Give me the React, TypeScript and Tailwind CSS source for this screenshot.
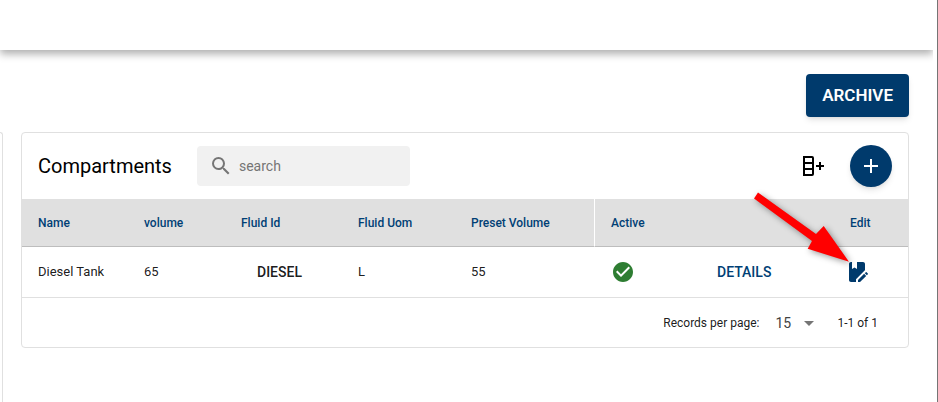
import { useState } from 'react'

interface Compartment {
  name: string
  volume: number
  fluidId: string
  fluidUom: string
  presetVolume: number
}

const compartments: Compartment[] = [
  { name: 'Diesel Tank', volume: 65, fluidId: 'DIESEL', fluidUom: 'L', presetVolume: 55 },
]

const columns = [
  { label: 'Name', width: 'w-[106px]' },
  { label: 'volume', width: 'w-[97px]' },
  { label: 'Fluid Id', width: 'w-[117px]' },
  { label: 'Fluid Uom', width: 'w-[113px]' },
  { label: 'Preset Volume', width: 'w-[139px]' },
  { label: 'Active', width: 'w-[107px] border-l border-l-white' },
  { label: '', width: 'w-[133px]' },
  { label: 'Edit', width: 'w-[74px]' },
]

const icons = {
  search:
    'M15.5 14h-.79l-.28-.27A6.471 6.471 0 0 0 16 9.5 6.5 6.5 0 1 0 9.5 16c1.61 0 3.09-.59 4.23-1.57l.27.28v.79l5 4.99L20.49 19l-4.99-5zm-6 0C7.01 14 5 11.99 5 9.5S7.01 5 9.5 5 14 7.01 14 9.5 11.99 14 9.5 14z',
  addColumn:
    'M11,2A2,2 0 0,1 13,4V20A2,2 0 0,1 11,22H2V2H11M4,10V14H11V10H4M4,16V20H11V16H4M4,4V8H11V4H4M15,11H18V8H20V11H23V13H20V16H18V13H15V11Z',
  add: 'M19 13h-6v6h-2v-6H5v-2h6V5h2v6h6v2z',
  check:
    'M12 2C6.48 2 2 6.48 2 12s4.48 10 10 10 10-4.48 10-10S17.52 2 12 2zm-2 15l-5-5 1.41-1.41L10 14.17l7.59-7.59L19 8l-9 9z',
  bookEdit:
    'M19.39 10.74L11 19.13V22H6C4.89 22 4 21.11 4 20V4C4 2.9 4.89 2 6 2H7V9L9.5 7.5L12 9V2H18C19.1 2 20 2.89 20 4V10.3C19.78 10.42 19.57 10.56 19.39 10.74M13 19.96V22H15.04L21.17 15.88L19.13 13.83L13 19.96M22.85 13.47L21.53 12.15C21.33 11.95 21 11.95 20.81 12.15L19.83 13.13L21.87 15.17L22.85 14.19C23.05 14 23.05 13.66 22.85 13.47Z',
  caret: 'M7 10l5 5 5-5z',
}

function Icon({ path, className }: { path: string; className?: string }) {
  return (
    <svg viewBox="0 0 24 24" fill="currentColor" className={className} aria-hidden="true">
      <path d={path} />
    </svg>
  )
}

function Toolbar() {
  const [search, setSearch] = useState('')

  return (
    <div className="flex h-[66px] items-center px-4">
      <h2 className="text-xl text-black">Compartments</h2>
      <label className="ml-[25px] flex h-10 w-[213px] items-center gap-1.5 rounded bg-[#f1f1f1] px-3">
        <Icon path={icons.search} className="size-6 shrink-0 text-[#757575]" />
        <input
          type="text"
          aria-label="Search compartments"
          placeholder="search"
          value={search}
          onChange={e => setSearch(e.target.value)}
          className="w-full min-w-0 bg-transparent text-sm outline-none placeholder:text-[#757575]"
        />
      </label>
      <div className="ml-auto flex items-center gap-[25px]">
        <button aria-label="Add column" className="text-black">
          <Icon path={icons.addColumn} className="size-6" />
        </button>
        <button
          aria-label="Add compartment"
          className="flex size-[42px] items-center justify-center rounded-full bg-[#003a6c] text-white shadow-md"
        >
          <Icon path={icons.add} className="size-6" />
        </button>
      </div>
    </div>
  )
}

function CompartmentTable() {
  return (
    <table className="w-full table-fixed border-separate border-spacing-0 text-left text-[13px]">
      <thead>
        <tr className="h-12 bg-[#e0e0e0] text-xs text-[#003f75]">
          {columns.map((col, index) => (
            <th key={index} className={`border-b border-b-[#bdbdbd] px-4 font-medium ${col.width}`}>
              {col.label}
            </th>
          ))}
        </tr>
      </thead>
      <tbody>
        {compartments.map(row => (
          <tr key={row.name} className="h-[50px]">
            <td className="px-4 whitespace-nowrap">{row.name}</td>
            <td className="px-4">{row.volume}</td>
            <td className="px-4">
              <button className="px-4 text-sm font-medium">{row.fluidId}</button>
            </td>
            <td className="px-4">{row.fluidUom}</td>
            <td className="px-4">{row.presetVolume}</td>
            <td className="border-l border-l-transparent px-4">
              <Icon path={icons.check} className="size-6 text-[#2e7d32]" />
            </td>
            <td className="px-4">
              <button className="text-sm font-medium text-[#003f75]">DETAILS</button>
            </td>
            <td className="px-[11px]">
              <button aria-label="Edit compartment" className="flex text-[#003a6c]">
                <Icon path={icons.bookEdit} className="size-6" />
              </button>
            </td>
          </tr>
        ))}
      </tbody>
    </table>
  )
}

function Pagination() {
  return (
    <div className="flex h-[50px] items-center justify-end border-t border-[#e0e0e0] px-[30px] text-xs">
      <label htmlFor="rows">Records per page:</label>
      <div className="relative ml-4 flex items-center">
        <select
          id="rows"
          defaultValue="15"
          className="w-[46px] appearance-none bg-transparent text-sm text-[#424242] outline-none"
        >
          <option>15</option>
          <option>25</option>
          <option>50</option>
        </select>
        <Icon path={icons.caret} className="pointer-events-none absolute right-0 size-6 text-[#757575]" />
      </div>
      <span className="ml-4">1-1 of 1</span>
    </div>
  )
}

// Red pointer towards the edit button
function Arrow() {
  return (
    <svg
      viewBox="0 0 110 84"
      className="pointer-events-none absolute top-[56px] right-12 h-[84px] w-[110px] drop-shadow-[2px_2px_3px_rgba(0,0,0,0.4)]"
      aria-hidden="true"
    >
      <path d="M8 3.5 L66 45 L73.7 37 L99 72.7 L57.7 59.7 L62 52 L4 9.5 Z" fill="#ff0000" />
    </svg>
  )
}

export default function App() {
  return (
    <div className="flex min-h-screen flex-col border-r border-[#757575] bg-white font-[Roboto,sans-serif] text-black/90">
      <header className="mr-1 h-[50px] bg-white shadow-[0_4px_8px_rgba(0,0,0,0.32)] [clip-path:inset(0_0_-16px_0)]" />
      <main className="flex grow flex-col gap-[15px] pt-6">
        <div className="flex justify-end pr-7">
          <button className="h-[43px] rounded bg-[#003a6c] px-4 text-[17px] font-semibold text-white shadow-md">
            ARCHIVE
          </button>
        </div>
        <div className="flex grow gap-[18px] pr-7">
          <aside className="w-[3px] shrink-0 rounded-tr border-t border-r border-[#e0e0e0]" />
          <section className="relative min-w-0 grow self-start rounded border border-[#e0e0e0]">
            <Toolbar />
            <CompartmentTable />
            <Pagination />
            <Arrow />
          </section>
        </div>
      </main>
    </div>
  )
}
